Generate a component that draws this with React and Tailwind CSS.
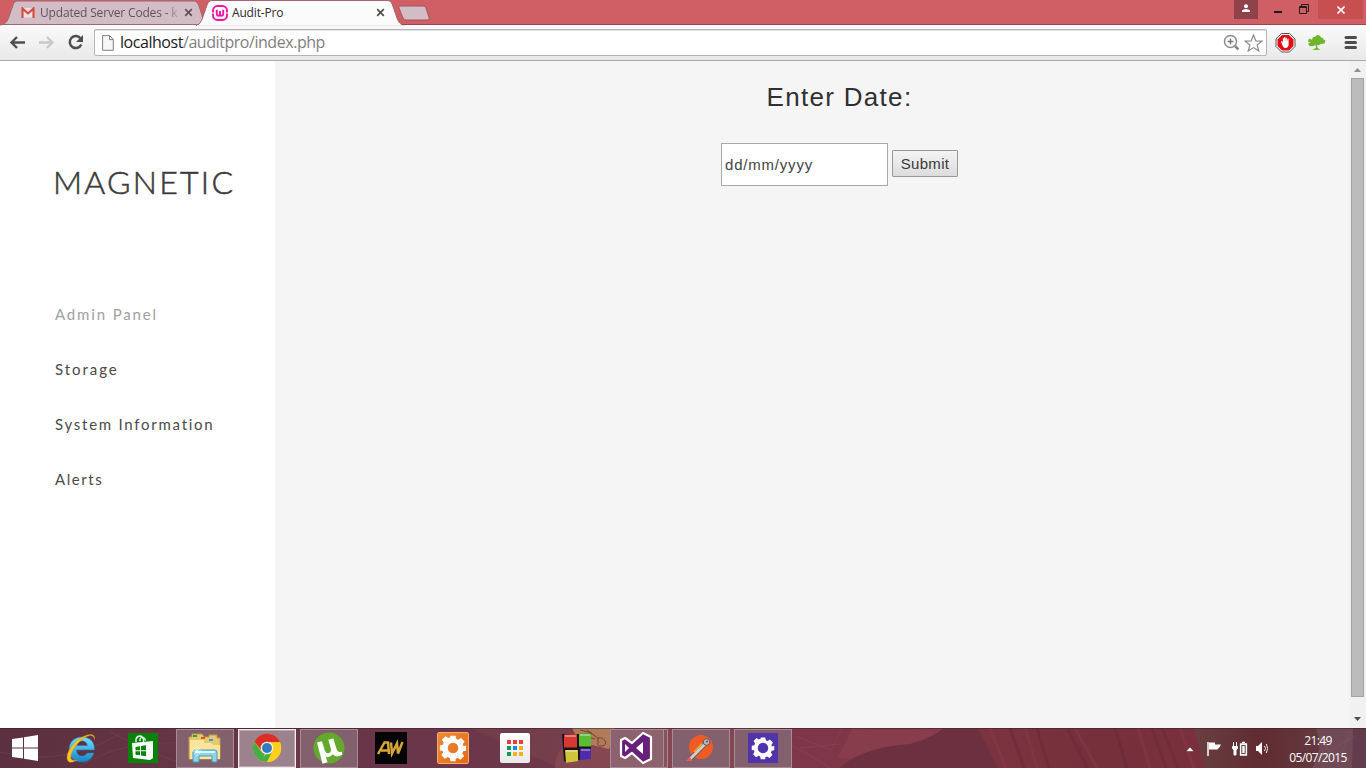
import React from 'react';

const GEAR = 'M13 2h6l.8 3.6 2.2 1 3.2-2 4 4-2 3.300 1 2.200L31 13v6l-3.400 .8-1 2.200 2 3.300-4 4-3.300-2-2.200 1L19 31h-6l-.8-3.700-2.200-1-3.300 2-4-4 2-3.300-1-2.200L1 19v-6l3.400-.8 1-2.200-2-3.300 4-4 3.200 2 2.200-1z';

function Gear({ size, hole }) {
  return (
    <svg width={size} height={size} viewBox="0 0 32 32">
      <path fill="#fff" fillRule="evenodd" d={`${GEAR}M16 ${16 - hole}a${hole} ${hole} 0 1 0 .01 0z`} />
    </svg>
  );
}

function TabClose({ color }) {
  return (
    <svg width="9" height="9" viewBox="0 0 9 9" className="shrink-0">
      <path d="M1.200 1.200l6.600 6.600M7.800 1.200L1.200 7.800" stroke={color} strokeWidth="1.700" />
    </svg>
  );
}

function TabStrip() {
  return (
    <div className="relative flex h-[25px] bg-[#cf5f65]">
      <svg className="absolute left-0 top-0" width="1366" height="26" viewBox="0 0 1366 26">
        <path d="M0 24.500H1366" stroke="#96474d" />
        <path d="M0 25C5 24.500 7 22 8.500 18L13 5C14 2 15.500 1 18 1H192C196 1 197.500 2 199 6L205 24.500H0z" fill="#d2bcc5" stroke="#a2656e" />
        <path d="M196 26C200 24 201 22 202.500 18L207 5C208 2 209.500.5 212 .5H387C390 .5 391.500 2 392.500 5L397 18C398.500 22 400 24.500 405 26z" fill="#fbfbfb" stroke="#a2656e" />
        <path d="M197 26H405" stroke="#fafafa" strokeWidth="1.500" />
        <path d="M400.500 6H423c1.500 0 2.500.7 3 2l3 9.500c.5 1.500 0 2.500-2 2.500H406c-1.500 0-2.500-.5-3-2l-4-10c-.4-1.300 0-2 1.500-2z" fill="#d2bcc5" stroke="#a9525b" />
      </svg>
      <div className="relative flex h-[25px] w-[203px] items-center pl-[21px]">
        <svg width="14" height="11" viewBox="0 0 15 12" className="shrink-0">
          <path d="M1 1h13v10.500H1z" fill="#ecdfe2" />
          <path d="M1.500 12V1.500l6 5.500 6-5.500V12" fill="none" stroke="#d54b3d" strokeWidth="2.300" />
        </svg>
        <span className="ml-[5px] w-[139px] overflow-hidden whitespace-nowrap bg-gradient-to-r from-[#5c5157] from-90% to-[#c2adb5] bg-clip-text font-['Open_Sans',sans-serif] text-[12px] leading-[18px] tracking-[-0.170px] text-transparent">Updated Server Codes - k</span>
        <span className="ml-[5px] flex"><TabClose color="#5f5157" /></span>
      </div>
      <div className="relative flex h-[25px] w-[195px] items-center pl-[9px]">
        <svg width="16" height="16" viewBox="0 0 16 16" className="shrink-0">
          <rect x="1" y="1" width="14" height="14" rx="4.500" fill="#fff" stroke="#f514a4" strokeWidth="1.900" />
          <path d="M0 8h2M14 8h2" stroke="#fff" strokeWidth="1.200" />
          <path d="M4.800 4.800v3.700q0 2.200 1.600 2.200T8 9V6M8 9q0 1.700 1.600 1.700t1.600-2.200V4.800" fill="none" stroke="#f514a4" strokeWidth="1.900" />
        </svg>
        <span className="ml-[4px] w-[144px] whitespace-nowrap font-['Open_Sans',sans-serif] text-[12px] leading-[18px] tracking-[-0.170px] text-[#2c2c2c]">Audit-Pro</span>
        <TabClose color="#4b4f4a" />
      </div>
      <div className="relative ml-auto flex">
        <div className="flex h-[19px] w-[24px] justify-center bg-[#8f424a] pt-[4px]">
          <svg width="8" height="8" viewBox="0 0 8 8"><circle cx="4" cy="2.200" r="2" fill="#fff" /><path d="M0 8V6.500Q1.200 5 4 5t4 1.500V8z" fill="#fff" /></svg>
        </div>
        <svg width="60" height="19" viewBox="0 0 60 19">
          <path d="M16 11h8v2h-8z" fill="#1f1a1b" />
          <path d="M41.500 6.500h7v7h-7zM41 7.500h8M43.500 6V4.500h7v7H49" fill="none" stroke="#2b1b1d" />
        </svg>
        <div className="mr-[3px] flex h-[19px] w-[45px] items-center justify-center bg-[#c74f50]">
          <svg width="8" height="8" viewBox="0 0 8 8"><path d="M.5.5l7 7M7.500.5l-7 7" stroke="#fff" strokeWidth="1.600" /></svg>
        </div>
      </div>
    </div>
  );
}

function Toolbar() {
  return (
    <div className="flex h-[36px] items-center border-b border-[#a9a9a9] bg-gradient-to-b from-[#fafafa] to-[#e9e9e9]">
      <svg width="94" height="35" viewBox="0 0 94 35" className="shrink-0">
        <path d="M25 17.500H11.500M17 12l-5.500 5.500L17 23" fill="none" stroke="#4f4f4f" strokeWidth="2.400" />
        <path d="M39 17.500H52.500M47 12l5.500 5.500L47 23" fill="none" stroke="#c9c9c9" strokeWidth="2.400" />
        <path d="M80.500 13.300A6 6 0 1 0 81.300 19.500" fill="none" stroke="#4f4f4f" strokeWidth="2.500" />
        <path d="M83 10v7h-7z" fill="#4f4f4f" />
      </svg>
      <div className="flex h-[27px] w-[1173px] shrink-0 items-center rounded-[2px] border border-[#b5b5b5] bg-white pl-[7px] shadow-[inset_0_1px_0_#e3e3e3]">
        <svg width="12" height="16" viewBox="0 0 12 16"><path d="M.6.6h7L11.300 4.500v10.800H.6zM7.500.6v4h3.800" fill="#f7f7f7" stroke="#808080" /></svg>
        <span className="ml-[6px] whitespace-nowrap pb-[2px] font-['Open_Sans',sans-serif] text-[16px] leading-[22px] tracking-[-0.450px] text-[#808080]"><span className="text-[#222]">localhost</span>/auditpro/index.php</span>
        <div className="ml-auto flex items-center gap-[4px] pr-[3px]">
          <svg width="17" height="17" viewBox="0 0 17 17"><circle cx="7.500" cy="7.500" r="6" fill="none" stroke="#8b8b8b" strokeWidth="1.500" /><path d="M7.500 4.500v6M4.500 7.500h6" stroke="#777" strokeWidth="1.400" /><path d="M12 12l3.500 3.500" stroke="#8b8b8b" strokeWidth="2.500" /></svg>
          <svg width="19" height="18" viewBox="0 0 19 18"><path d="M9.500 1l2.300 5.800 6.100.3-4.800 3.900 1.700 6-5.300-3.400L4.200 17l1.700-6-4.800-3.900 6.100-.3z" fill="#fff" stroke="#8b8b8b" strokeWidth="1.200" /></svg>
        </div>
      </div>
      <svg width="99" height="35" viewBox="0 0 99 35" className="shrink-0">
        <path d="M14.500 8.500h8l5.500 5.500v7.500L22.500 27h-8L9 21.500V14z" fill="#fff" stroke="#555" />
        <path d="M15 10h7l4.500 4.500v6.500L22 25.500h-7L10.500 21v-6.500z" fill="#e20d12" />
        <path d="M14 16.500l1-.6.8 1.800v-4.500h1.200v3.500-4.500h1.300v4.500l.3-4h1.200v4.300l.8-3.300h1V20q-.5 3-3.200 3c-2 0-2.800-2-4.400-6.500z" fill="#fff" />
        <path d="M42 13.500l3 1.200q.5-3.500 3-2.700 1-2 3-2 2.500 0 3 2.500 2.500 0 2.500 2l2 1-1 3-3.500.5-2.500 1.200-1.500-.5.7 3.500 2.800 1.300-3 .5h-5l3.500-2.300-.5-3-2.500 1.500-3.500-.3-1.500-2.200 2.500-1-2.500-1z" fill="#70b62c" />
        <path d="M79 12.500h9.500M79 17.500h9.500M79 22.500h9.500" stroke="#4d4d4d" strokeWidth="3" strokeLinecap="round" />
      </svg>
    </div>
  );
}

function Page() {
  return (
    <div className="flex h-[667px] bg-[#f5f5f5]">
      <aside className="w-[275px] shrink-0 bg-white pl-[55px] pt-[97px]">
        <h1 className="ml-[-2px] whitespace-nowrap font-[Lato,sans-serif] text-[32px] font-light leading-[48px] tracking-[2.250px] text-[#3c3c3c] [-webkit-text-stroke:0.550px_#3c3c3c]">MAGNETIC</h1>
        <nav className="mt-[81px] flex flex-col font-[Lato,sans-serif] text-[15px] leading-[55px] text-[#4a4a4a]">
          <a className="whitespace-nowrap tracking-[1.850px] text-[#a0a0a0]">Admin Panel</a>
          <a className="whitespace-nowrap tracking-[1.950px]">Storage</a>
          <a className="whitespace-nowrap tracking-[1.740px]">System Information</a>
          <a className="whitespace-nowrap tracking-[1.550px]">Alerts</a>
        </nav>
      </aside>
      <main className="flex grow flex-col items-center pl-[55px] font-['Liberation_Sans',Arial,sans-serif]">
        <h2 className="mt-[18px] whitespace-nowrap text-[26px] leading-[36px] tracking-[1.300px] text-[#303030]">Enter Date:</h2>
        <form className="mt-[28px] flex items-start gap-[4px]">
          <div className="flex h-[43px] w-[167px] items-center border border-[#a9a9a9] bg-white pl-[3px] pt-[2px] text-[15px] tracking-[0.800px] text-[#444]">dd/mm/yyyy</div>
          <button type="button" className="mt-[7px] h-[27px] w-[66px] whitespace-nowrap rounded-[1px] border border-[#999] bg-gradient-to-b from-[#f4f4f4] to-[#dcdcdc] text-[15px] leading-[25px] tracking-[0.300px] text-[#3a3a3a]">Submit</button>
        </form>
      </main>
      <div className="flex w-[17px] shrink-0 flex-col items-center bg-[#f1f1f1]">
        <svg width="17" height="17" viewBox="0 0 17 17"><path d="M5 11l3.500-4 3.500 4z" fill="#8e8e8e" /></svg>
        <div className="h-[619px] w-[13px] border border-[#a2a2a2] bg-[#bcbcbc]" />
        <svg width="17" height="17" viewBox="0 0 17 17" className="mt-auto"><path d="M5 6l3.500 4L12 6z" fill="#4c4c4c" /></svg>
      </div>
    </div>
  );
}

function Slot({ open, active, children }) {
  const frame = active
    ? 'border-[#f1e9ec] bg-[#9c828c] shadow-[inset_0_0_0_1px_#b8a5ad]'
    : open
      ? 'border-[#a88b95] bg-[#82606d]'
      : 'border-transparent';
  return (
    <div className="flex h-[40px] w-[62px] shrink-0 items-center justify-center">
      <div className={`flex h-[39px] w-[58px] items-center justify-center border ${frame}`}>{children}</div>
    </div>
  );
}

function Taskbar() {
  return (
    <div className="relative h-[40px] overflow-hidden bg-gradient-to-r from-[#5c3040] via-[#79404d] via-45% to-[#653443]">
      <svg className="absolute left-0 top-0" width="1366" height="40" viewBox="0 0 1366 40">
        <defs>
          <linearGradient id="drape" x2="1" y2="0"><stop stopColor="#7c3440" /><stop offset=".5" stopColor="#75303b" /><stop offset="1" stopColor="#7b303c" /></linearGradient>
          <linearGradient id="shade" x2="1" y2="0"><stop stopColor="#6a3f42" /><stop offset=".5" stopColor="#5f2c30" /><stop offset="1" stopColor="#643a42" /></linearGradient>
        </defs>
        <path d="M340 0h130l90 40H340z" fill="#65304c" opacity=".45" />
        <path d="M555 40q0-22 20-25 10-15 40-15h180l-30 40z" fill="#95515a" opacity=".45" />
        <path d="M572 0h43l-6 21-30-7z" fill="#b8855c" opacity=".85" />
        <path d="M580 2l12 3m-10 2l13 4m-8-9l12 9m-1-1q5-1 7 3t-3 5-4-4z" fill="none" stroke="#734632" />
        <path d="M780 0h166q-15 16-30 24-30 12-85 16h-51z" fill="#7f3648" />
        <path d="M852 0q30 4 94 0-14 18-40 25-30 8-68 5z" fill="#8a404e" opacity=".7" />
        <path d="M840 40q20-20 70-24 22-6 34-16h38l16 40z" fill="#6d3040" />
        <path d="M978 0h216l12 40H998z" fill="url(#drape)" />
        <path d="M1010 0l14 40M1037 0l12 40M1067 0l20 40M1115 0l12 40M1152 0l14 40M1162 0l16 40" stroke="#5f2636" strokeWidth="3" opacity=".35" />
        <path d="M990 0l16 40M1025 0l12 40M1075 0l22 40M1138 0l12 40M1180 0l14 40" stroke="#96444f" strokeWidth="3" opacity=".25" />
        <path d="M1194 0h126q10 25 0 40h-115z" fill="url(#shade)" />
        <path d="M1316 0q8 20-4 40h54V0z" fill="#73505b" opacity=".8" />
        <path d="M1353 0h13v40h-14z" fill="#5d3448" opacity=".7" />
        <path d="M0 24q60 16 120-18M80 38q50-32 140-20M110 4q35 18 78 34M780 12q30 14 50 28M795 8l36 14L842 0M800 20l40-4M1320 8l17 28 14-34M1320 29l36-22" fill="none" stroke="#ab6c7c" opacity=".18" />
        <path d="M0 .5h1366" stroke="#331d29" opacity=".5" />
      </svg>
      <div className="relative flex h-[40px] items-center">
        <div className="flex w-[50px] shrink-0 pl-[12px]">
          <svg width="26" height="26" viewBox="0 0 26 26"><path d="M0 4l11-1.600V12.400H0zM12 2.200L26 0v12.400H12zM0 13.500h11v10L0 22zM12 13.500h14V26l-14-2.200z" fill="#fff" /></svg>
        </div>
        <Slot>
          <svg width="32" height="32" viewBox="0 0 32 32">
            <defs><linearGradient id="ie" x2="0" y2="1"><stop stopColor="#74ddfb" /><stop offset="1" stopColor="#1585cd" /></linearGradient></defs>
            <path d="M29.500 18H11.500c.3 4 2.500 6 5.500 6 2.500 0 4-1 5-3h7c-2 6-6.500 9-12 9C9 30 4 25 4 17.500S9.500 5 17 5c8 0 13 5 12.500 13zM11.800 13.500h10.500c-.5-3-2.300-4.500-5.300-4.500-2.800 0-4.600 1.600-5.200 4.500z" fill="url(#ie)" stroke="#2476a6" strokeWidth=".6" />
            <path d="M29.500 7.500c1-6-5-6.500-12-2.500C8 10-1 23 3 29c2 2.500 6 1 9-1-3 .5-5 .5-6-1.500C4.500 21 12 10 20 5.500c5-3 9-2.500 9.500 2z" fill="#fdc41c" stroke="#d39214" strokeWidth=".4" />
          </svg>
        </Slot>
        <Slot>
          <svg width="30" height="30" viewBox="0 0 30 30"><path d="M0 0h30v30H0z" fill="#078407" /><path d="M8 9V6q1-3 4-3t3.500 4v2M12 8V6q1-2 3-1.500t2.500 3" fill="none" stroke="#eaf5e8" strokeWidth="1.400" /><path d="M4 10l21-2v17l-3 2L5 25z" fill="#fff" /><path d="M7.500 14l4.500-.7v4H7.500zM13 13.100l5-.8v5h-5zM7.500 18.300H12v4l-4.500-.6zM13 18.300h5v5l-5-.7z" fill="#078407" /></svg>
        </Slot>
        <Slot open>
          <svg width="34" height="31" viewBox="0 0 34 31">
            <path d="M1 26V4h3V1h10l2 3h5V2h8v3h3v21z" fill="#e7c86e" stroke="#c79b45" />
            <path d="M2 26V7h14v3h7l2 2h7v14z" fill="#fae59a" />
            <path d="M5 2h4v2H5z" fill="#1eac37" /><path d="M13 4h4v2h-4z" fill="#d55329" /><path d="M21 6h4v2h-4z" fill="#3698e5" />
            <path d="M5 29V19q0-2 2-2h20q2 0 2 2v10h-5v-6H11v6z" fill="#92d2e9" stroke="#4a9dbf" />
            <path d="M7 19h20" stroke="#d6f6ff" strokeWidth="2" /><path d="M9 13v10M4 18h10M6 15l6 6m0-6l-6 6" stroke="#eaffff" strokeWidth=".7" />
          </svg>
        </Slot>
        <Slot open active>
          <svg width="30" height="30" viewBox="0 0 30 30"><circle cx="15" cy="15" r="14" fill="#fdcd17" /><path d="M15 15L10 28.200A14 14 0 0 1 2.500 8.500L9 18.500 15 21z" fill="#46ad48" /><path d="M15 28.900A14 14 0 0 1 9 27.500L15 20l5-1z" fill="#46ad48" /><path d="M2.500 8.500A14 14 0 0 1 28 9.300H15L9 17z" fill="#db2e25" /><path d="M28 9.300H15L21 17l-6 12A14 14 0 0 0 28 9.300z" fill="#fed01e" /><circle cx="15" cy="15" r="6.300" fill="#f3f3ed" /><circle cx="15" cy="15" r="5" fill="#347abe" /></svg>
        </Slot>
        <Slot open>
          <svg width="32" height="32" viewBox="0 0 32 32"><circle cx="16" cy="16" r="15.500" fill="#62a92d" /><path d="M4 10.500l5-1.300 2.700 9q1.500 4 4.500 2.800 2.500-1 1.500-5L15.300 7.700l5-1.300 3.500 11.400q1 3 5 2l.5 3q-6.500 3.500-9.500-.5-3 4-7 2.500l1.700 5.500-5 1.500z" fill="#fff" /></svg>
        </Slot>
        <Slot>
          <svg width="32" height="32" viewBox="0 0 32 32"><path d="M0 0h32v32H0z" fill="#050505" /><path d="M3 22L9.500 10.500H13L14 22M6 18.500h8M16 10.500l1 11 5-10 1 10 4.500-11.500" fill="none" stroke="#d4a735" strokeWidth="2.500" /></svg>
        </Slot>
        <Slot><div className="flex h-[32px] w-[32px] items-center justify-center rounded-[2px] border border-[#f7ae63] bg-gradient-to-br from-[#ed8a37] to-[#e56a14]"><Gear size={28} hole={6} /></div></Slot>
        <Slot>
          <div className="grid h-[30px] w-[30px] grid-cols-[4px_4px_4px] content-center justify-center gap-[2px] rounded-[2px] bg-gradient-to-b from-white to-[#e9e9ec]">
            {['#f03b37', '#f03b37', '#f03b37', '#109d59', '#1688e8', '#fbb01a', '#109d59', '#fbb01a', '#fbb01a'].map((c, i) => <i key={i} className="h-[4px] w-[4px]" style={{ background: c }} />)}
          </div>
        </Slot>
        <Slot>
          <svg width="32" height="32" viewBox="0 0 32 32"><path d="M1 2h15l14-.5V26l-13 2-11 3-3-2z" fill="#191319" /><path d="M3 2.500l13-.5v13.500H3z" fill="#d83830" /><path d="M18 1.500h12v13H18z" fill="#5abc31" /><path d="M4 18h13v11L5 31z" fill="#d1c438" /><path d="M19 16.500h11V27l-11 1z" fill="#4f2bac" /><path d="M4 4h11M19 3h10M5 19h11M20 18h9" stroke="#fff" opacity=".35" strokeWidth="2" /></svg>
        </Slot>
        <div className="flex w-[62px] shrink-0 pl-[2px]">
          <div className="flex h-[39px] w-[54px] items-center justify-center border border-[#a88b95] bg-[#8b626e]">
            <svg width="34" height="32" viewBox="0 0 34 32" className="mr-[3px]"><path d="M24 1l8 4v22l-8 4-11-10-7 5-4-2V8l4-2 7 5z" fill="#68217a" stroke="#fff" strokeWidth="2.200" strokeLinejoin="round" /><path d="M24 10v12l-7-6zM6 12l4 4-4 4z" fill="#fff" /></svg>
          </div>
          <div className="h-[39px] w-[4px] border border-l-0 border-[#a88b95] bg-[#845360]" />
        </div>
        <Slot open>
          <svg width="30" height="30" viewBox="0 0 30 30"><circle cx="15" cy="14" r="12" fill="#ef5b25" /><path d="M20 10L9 21l-5 5" stroke="#4f5559" strokeWidth="4.500" /><path d="M20 10L9 21l-5 5" stroke="#d4cdc3" strokeWidth="3" /><path d="M16 10.500L8 19" stroke="#f1a53e" strokeWidth="1.500" /><circle cx="20.500" cy="9" r="3.300" fill="#bbb8b3" stroke="#5b5c5c" /><circle cx="21" cy="8.500" r="1" fill="#555" /><path d="M0 28l4-4 2 4z" fill="#ec604b" /></svg>
        </Slot>
        <Slot open><div className="flex h-[30px] w-[30px] items-center justify-center bg-[#5133ab]"><Gear size={24} hole={7} /></div></Slot>
        <div className="ml-auto flex h-[40px] items-center">
          <svg width="88" height="40" viewBox="0 0 88 40">
            <path d="M6 23.500L10 19l4 4.500z" fill="#fff" stroke="#43212b" strokeWidth=".5" />
            <path d="M28 14v14" stroke="#fff" strokeWidth="1.500" /><path d="M29 14.500h6v2h6q-3 6-5 5h-7z" fill="#fff" />
            <path d="M53.500 14v4M56.500 14v4M52.500 18.500h5v2l-1.500 1.500v5h-2v-5l-1.500-1.500z" fill="#fff" stroke="#fff" />
            <path d="M60.500 16h6v11h-6z" fill="#d9d0d2" stroke="#fff" strokeWidth="1.300" /><path d="M61.800 17.500h3.400v8h-3.400z" fill="#fff" stroke="#40262b" strokeWidth=".8" /><path d="M62 14.500h3" stroke="#fff" strokeWidth="1.500" />
            <path d="M76 18h2l4-4v13l-4-4h-2z" fill="#fff" /><path d="M84.500 18q2 2.500 0 5M86.300 16q2.800 4.500 0 9" fill="none" stroke="#fff" strokeWidth=".9" />
          </svg>
          <div className="ml-[3px] flex w-[95px] flex-col items-center whitespace-nowrap pt-[1px] pr-[1px] font-['Open_Sans',sans-serif] text-[12px] leading-[17px] text-white">
            <span className="tracking-[-0.600px]">21:49</span>
            <span className="tracking-[-0.600px]">05/07/2015</span>
          </div>
        </div>
      </div>
    </div>
  );
}

export default function App() {
  return (
    <div className="flex h-[768px] w-[1366px] flex-col overflow-hidden">
      <TabStrip />
      <Toolbar />
      <Page />
      <Taskbar />
    </div>
  );
}
